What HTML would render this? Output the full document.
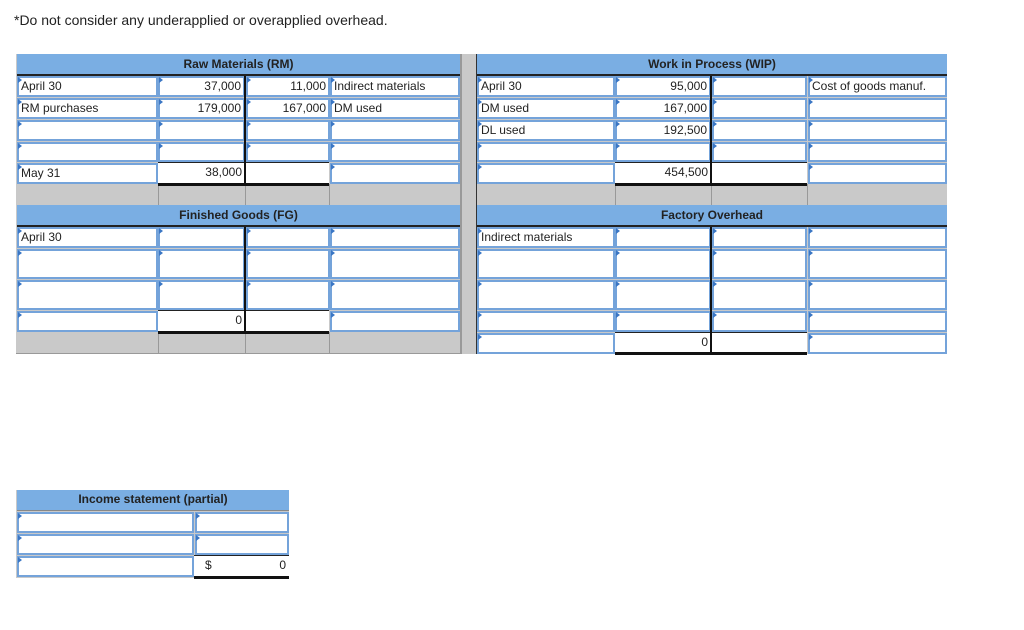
<!DOCTYPE html>
<html><head><meta charset="utf-8"><style>
body{margin:0;width:1024px;height:630px;background:#fff;font-family:"Liberation Sans",Arial,sans-serif;position:relative;overflow:hidden}
.a{position:absolute;box-sizing:border-box}
.g{background:#c9c9c9}
.h{background:#7aaee3;font-weight:bold;font-size:12px;color:#222;text-align:center;line-height:20px;border-bottom:2px solid #222}
.c{background:#fff;border:2px solid #74a3da;font-size:12px;color:#222;padding:0 2px;line-height:16px;white-space:nowrap}
.c::before{content:"";position:absolute;left:0;top:0;border-left:4px solid #3a76c4;border-bottom:3px solid transparent;border-top:3px solid transparent;transform:translate(-1px,-1px)}
.n{text-align:right}
.t{background:#fff;font-size:12px;color:#222;line-height:18px;padding:0 3px;text-align:right;border-top:1px solid #222;border-bottom:3px solid #111}
.vl{background:#111;width:2px}
.gl{background:#999}
</style></head><body>
<div class="a" style="left:14px;top:12px;font-size:14px;color:#222">*Do not consider any underapplied or overapplied overhead.</div>

<div class="a g" style="left:16px;top:54px;width:931px;height:300px"></div>
<div class="a gl" style="left:158px;top:184px;width:1px;height:22px"></div>
<div class="a gl" style="left:245px;top:184px;width:1px;height:22px"></div>
<div class="a gl" style="left:329px;top:184px;width:1px;height:22px"></div>
<div class="a gl" style="left:460px;top:54px;width:2px;height:300px"></div>
<div class="a" style="left:476px;top:54px;width:1px;height:300px;background:#333"></div>
<div class="a gl" style="left:615px;top:184px;width:1px;height:22px"></div>
<div class="a gl" style="left:711px;top:184px;width:1px;height:22px"></div>
<div class="a gl" style="left:807px;top:184px;width:1px;height:22px"></div>
<div class="a gl" style="left:158px;top:332px;width:1px;height:22px"></div>
<div class="a gl" style="left:245px;top:332px;width:1px;height:22px"></div>
<div class="a gl" style="left:329px;top:332px;width:1px;height:22px"></div>
<div class="a gl" style="left:16px;top:353px;width:446px;height:1px"></div>

<div class="a h" style="left:17px;top:54px;width:443px;height:22px">Raw Materials (RM)</div>
<div class="a c" style="left:17px;top:76px;width:141px;height:21px">April 30</div>
<div class="a c n" style="left:158px;top:76px;width:87px;height:21px">37,000</div>
<div class="a c n" style="left:246px;top:76px;width:84px;height:21px">11,000</div>
<div class="a c" style="left:330px;top:76px;width:130px;height:21px">Indirect materials</div>
<div class="a c" style="left:17px;top:98px;width:141px;height:21px">RM purchases</div>
<div class="a c n" style="left:158px;top:98px;width:87px;height:21px">179,000</div>
<div class="a c n" style="left:246px;top:98px;width:84px;height:21px">167,000</div>
<div class="a c" style="left:330px;top:98px;width:130px;height:21px">DM used</div>
<div class="a c" style="left:17px;top:120px;width:141px;height:21px"></div>
<div class="a c" style="left:158px;top:120px;width:87px;height:21px"></div>
<div class="a c" style="left:246px;top:120px;width:84px;height:21px"></div>
<div class="a c" style="left:330px;top:120px;width:130px;height:21px"></div>
<div class="a c" style="left:17px;top:142px;width:141px;height:20px"></div>
<div class="a c" style="left:158px;top:142px;width:87px;height:20px"></div>
<div class="a c" style="left:246px;top:142px;width:84px;height:20px"></div>
<div class="a c" style="left:330px;top:142px;width:130px;height:20px"></div>
<div class="a c" style="left:17px;top:163px;width:141px;height:21px">May 31</div>
<div class="a t" style="left:158px;top:162px;width:87px;height:24px">38,000</div>
<div class="a t" style="left:245px;top:162px;width:84px;height:24px"></div>
<div class="a c" style="left:330px;top:163px;width:130px;height:21px"></div>
<div class="a vl" style="left:244px;top:76px;height:110px"></div>

<div class="a h" style="left:477px;top:54px;width:470px;height:22px">Work in Process (WIP)</div>
<div class="a c" style="left:477px;top:76px;width:138px;height:21px">April 30</div>
<div class="a c n" style="left:615px;top:76px;width:96px;height:21px">95,000</div>
<div class="a c" style="left:712px;top:76px;width:95px;height:21px"></div>
<div class="a c" style="left:808px;top:76px;width:139px;height:21px">Cost of goods manuf.</div>
<div class="a c" style="left:477px;top:98px;width:138px;height:21px">DM used</div>
<div class="a c n" style="left:615px;top:98px;width:96px;height:21px">167,000</div>
<div class="a c" style="left:712px;top:98px;width:95px;height:21px"></div>
<div class="a c" style="left:808px;top:98px;width:139px;height:21px"></div>
<div class="a c" style="left:477px;top:120px;width:138px;height:21px">DL used</div>
<div class="a c n" style="left:615px;top:120px;width:96px;height:21px">192,500</div>
<div class="a c" style="left:712px;top:120px;width:95px;height:21px"></div>
<div class="a c" style="left:808px;top:120px;width:139px;height:21px"></div>
<div class="a c" style="left:477px;top:142px;width:138px;height:20px"></div>
<div class="a c" style="left:615px;top:142px;width:96px;height:20px"></div>
<div class="a c" style="left:712px;top:142px;width:95px;height:20px"></div>
<div class="a c" style="left:808px;top:142px;width:139px;height:20px"></div>
<div class="a c" style="left:477px;top:163px;width:138px;height:21px"></div>
<div class="a t" style="left:615px;top:162px;width:96px;height:24px">454,500</div>
<div class="a t" style="left:711px;top:162px;width:96px;height:24px"></div>
<div class="a c" style="left:808px;top:163px;width:139px;height:21px"></div>
<div class="a vl" style="left:710px;top:76px;height:110px"></div>

<div class="a h" style="left:17px;top:205px;width:443px;height:22px">Finished Goods (FG)</div>
<div class="a c" style="left:17px;top:227px;width:141px;height:21px">April 30</div>
<div class="a c" style="left:158px;top:227px;width:87px;height:21px"></div>
<div class="a c" style="left:246px;top:227px;width:84px;height:21px"></div>
<div class="a c" style="left:330px;top:227px;width:130px;height:21px"></div>
<div class="a c" style="left:17px;top:249px;width:141px;height:30px"></div>
<div class="a c" style="left:158px;top:249px;width:87px;height:30px"></div>
<div class="a c" style="left:246px;top:249px;width:84px;height:30px"></div>
<div class="a c" style="left:330px;top:249px;width:130px;height:30px"></div>
<div class="a c" style="left:17px;top:280px;width:141px;height:30px"></div>
<div class="a c" style="left:158px;top:280px;width:87px;height:30px"></div>
<div class="a c" style="left:246px;top:280px;width:84px;height:30px"></div>
<div class="a c" style="left:330px;top:280px;width:130px;height:30px"></div>
<div class="a c" style="left:17px;top:311px;width:141px;height:21px"></div>
<div class="a t" style="left:158px;top:310px;width:87px;height:24px">0</div>
<div class="a t" style="left:245px;top:310px;width:84px;height:24px"></div>
<div class="a c" style="left:330px;top:311px;width:130px;height:21px"></div>
<div class="a vl" style="left:244px;top:227px;height:107px"></div>

<div class="a h" style="left:477px;top:205px;width:470px;height:22px">Factory Overhead</div>
<div class="a c" style="left:477px;top:227px;width:138px;height:21px">Indirect materials</div>
<div class="a c" style="left:615px;top:227px;width:96px;height:21px"></div>
<div class="a c" style="left:712px;top:227px;width:95px;height:21px"></div>
<div class="a c" style="left:808px;top:227px;width:139px;height:21px"></div>
<div class="a c" style="left:477px;top:249px;width:138px;height:30px"></div>
<div class="a c" style="left:615px;top:249px;width:96px;height:30px"></div>
<div class="a c" style="left:712px;top:249px;width:95px;height:30px"></div>
<div class="a c" style="left:808px;top:249px;width:139px;height:30px"></div>
<div class="a c" style="left:477px;top:280px;width:138px;height:30px"></div>
<div class="a c" style="left:615px;top:280px;width:96px;height:30px"></div>
<div class="a c" style="left:712px;top:280px;width:95px;height:30px"></div>
<div class="a c" style="left:808px;top:280px;width:139px;height:30px"></div>
<div class="a c" style="left:477px;top:311px;width:138px;height:21px"></div>
<div class="a c" style="left:615px;top:311px;width:96px;height:21px"></div>
<div class="a c" style="left:712px;top:311px;width:95px;height:21px"></div>
<div class="a c" style="left:808px;top:311px;width:139px;height:21px"></div>
<div class="a c" style="left:477px;top:333px;width:138px;height:21px"></div>
<div class="a t" style="left:615px;top:332px;width:96px;height:23px">0</div>
<div class="a t" style="left:711px;top:332px;width:96px;height:23px"></div>
<div class="a c" style="left:808px;top:333px;width:139px;height:21px"></div>
<div class="a vl" style="left:710px;top:227px;height:128px"></div>

<div class="a g" style="left:16px;top:490px;width:273px;height:88px"></div>
<div class="a h" style="left:17px;top:490px;width:272px;height:21px;line-height:19px;border-bottom:1px solid #888">Income statement (partial)</div>
<div class="a c" style="left:17px;top:512px;width:177px;height:21px"></div>
<div class="a c" style="left:195px;top:512px;width:94px;height:21px"></div>
<div class="a c" style="left:17px;top:534px;width:177px;height:21px"></div>
<div class="a c" style="left:195px;top:534px;width:94px;height:21px"></div>
<div class="a c" style="left:17px;top:556px;width:177px;height:21px"></div>
<div class="a t" style="left:194px;top:555px;width:95px;height:24px"><span style="float:left;padding-left:8px">$</span>0</div>
</body></html>
